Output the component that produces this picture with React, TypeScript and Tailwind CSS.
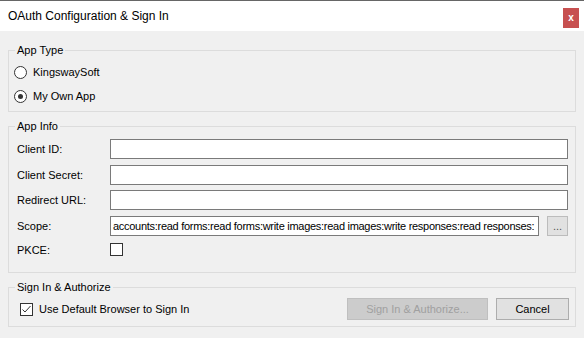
import React from "react";

function Radio({ checked, label }: { checked?: boolean; label: string }) {
  return (
    <div className="flex h-[24px] items-center">
      <div className="flex h-[13px] w-[13px] items-center justify-center rounded-full border border-[#333333] bg-white">
        {checked && <div className="h-[5px] w-[5px] rounded-full bg-[#333333]" />}
      </div>
      <span className="ml-[6px]">{label}</span>
    </div>
  );
}

function Box({ checked }: { checked?: boolean }) {
  return (
    <div className="flex h-[13px] w-[13px] shrink-0 items-center justify-center border border-[#333333] bg-white">
      {checked && (
        <svg width="11" height="11" viewBox="0 0 11 11">
          <polyline points="1.5,5.5 4,8 9.5,2" fill="none" stroke="#333333" strokeWidth="1" />
        </svg>
      )}
    </div>
  );
}

function Field({ label, className, children }: { label: string; className?: string; children?: React.ReactNode }) {
  return (
    <div className={"flex h-[20px] min-w-0 items-center " + (className ?? "")}>
      <span className="w-[93px] shrink-0">{label}</span>
      {children ?? <div className="h-[20px] min-w-0 flex-1 border border-[#7a7a7a] bg-white" />}
    </div>
  );
}

export default function App() {
  return (
    <div
      className="flex h-[338px] w-[584px] flex-col overflow-hidden bg-[#f0f0f0] text-[11px] leading-[14px] text-black"
      style={{ fontFamily: '"Liberation Sans", Arial, sans-serif' }}
    >
      <div className="flex h-[31px] shrink-0 items-start justify-between border-t border-[#666666] bg-white">
        <span className="ml-[8px] mt-[8px] text-[12px] leading-[15px]">OAuth Configuration &amp; Sign In</span>
        <div className="mr-[5px] mt-[7px] flex h-[20px] w-[16px] items-center justify-center bg-[#c75050] text-[10px] font-bold leading-none text-white">
          x
        </div>
      </div>

      <div className="flex min-w-0 flex-col px-[8px]">
        <fieldset className="mt-[12px] min-w-0 border border-[#dcdcdc] pb-[3px]">
          <legend className="ml-[6px] px-[2px] leading-[14px]">App Type</legend>
          <div className="mt-[3px] flex flex-col pl-[5px]">
            <Radio label="KingswaySoft" />
            <Radio checked label="My Own App" />
          </div>
        </fieldset>

        <fieldset className="mt-[7px] min-w-0 border border-[#dcdcdc] pb-[16px]">
          <legend className="ml-[6px] px-[2px] leading-[14px]">App Info</legend>
          <div className="flex min-w-0 flex-col pl-[8px] pr-[7px]">
            <Field label="Client ID:" className="mt-[6px]" />
            <Field label="Client Secret:" className="mt-[6px]" />
            <Field label="Redirect URL:" className="mt-[5px]" />
            <Field label="Scope:" className="mt-[6px]">
              <div className="flex h-[20px] min-w-0 flex-1 items-center">
                <div className="flex h-[20px] min-w-0 flex-1 items-center overflow-hidden whitespace-nowrap border border-[#7a7a7a] bg-white pl-[2px] tracking-[-0.28px]">
                  accounts:read forms:read forms:write images:read images:write responses:read responses:
                </div>
                <div className="ml-[8px] flex h-[20px] w-[21px] shrink-0 items-start justify-center border border-[#bcbcbc] bg-[#e1e1e1] text-[#555555]">
                  <span className="mt-[3px] leading-[12px]">...</span>
                </div>
              </div>
            </Field>
            <div className="mt-[7px] flex h-[13px] items-center">
              <span className="w-[93px] shrink-0">PKCE:</span>
              <Box />
            </div>
          </div>
        </fieldset>

        <fieldset className="mt-[7px] min-w-0 border border-[#dcdcdc] pb-[6px]">
          <legend className="ml-[6px] px-[2px] leading-[14px]">Sign In &amp; Authorize</legend>
          <div className="mt-[4px] flex h-[22px] items-center pl-[11px] pr-[6px]">
            <Box checked />
            <span className="ml-[6px]">Use Default Browser to Sign In</span>
            <div className="ml-auto flex h-[22px] w-[141px] items-center justify-center border border-[#bfbfbf] bg-[#cccccc] text-[#a0a0a0]">
              Sign In &amp; Authorize...
            </div>
            <div className="ml-[8px] flex h-[22px] w-[73px] items-center justify-center border border-[#adadad] bg-[#e1e1e1]">
              Cancel
            </div>
          </div>
        </fieldset>
      </div>
    </div>
  );
}
